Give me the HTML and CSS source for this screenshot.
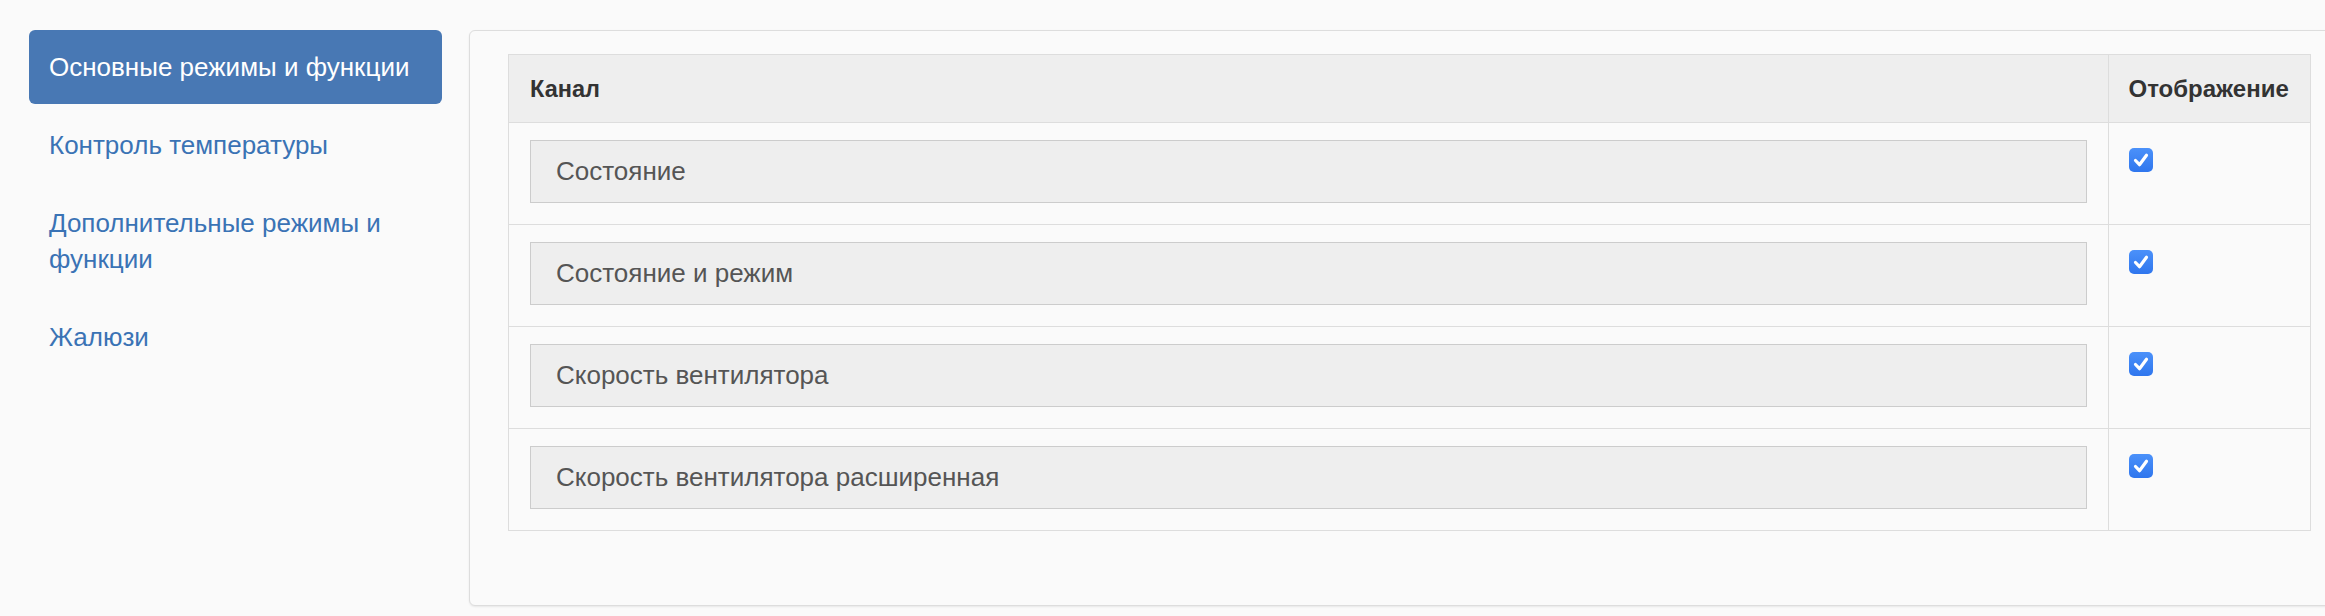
FILE: index.html
```html
<!DOCTYPE html>
<html lang="ru">
<head>
<meta charset="utf-8">
<title>Каналы</title>
<link rel="stylesheet" href="styles.css">
</head>
<body>
<div class="page">
  <ul class="nav">
    <li class="nav-item active"><a href="#">Основные режимы и функции</a></li>
    <li class="nav-item"><a href="#">Контроль температуры</a></li>
    <li class="nav-item"><a href="#">Дополнительные режимы и функции</a></li>
    <li class="nav-item"><a href="#">Жалюзи</a></li>
  </ul>
  <div class="panel">
    <table class="grid">
      <thead>
        <tr>
          <th class="col-channel">Канал</th>
          <th class="col-show">Отображение</th>
        </tr>
      </thead>
      <tbody>
        <tr>
          <td class="cell-channel"><div class="field">Состояние</div></td>
          <td class="cell-show"><span class="check"><svg viewBox="0 0 24 24" width="24" height="24"><path d="M6.5 12.5l4 4.2 7-9.4" fill="none" stroke="#fff" stroke-width="3.2" stroke-linecap="round" stroke-linejoin="round"/></svg></span></td>
        </tr>
        <tr>
          <td class="cell-channel"><div class="field">Состояние и режим</div></td>
          <td class="cell-show"><span class="check"><svg viewBox="0 0 24 24" width="24" height="24"><path d="M6.5 12.5l4 4.2 7-9.4" fill="none" stroke="#fff" stroke-width="3.2" stroke-linecap="round" stroke-linejoin="round"/></svg></span></td>
        </tr>
        <tr>
          <td class="cell-channel"><div class="field">Скорость вентилятора</div></td>
          <td class="cell-show"><span class="check"><svg viewBox="0 0 24 24" width="24" height="24"><path d="M6.5 12.5l4 4.2 7-9.4" fill="none" stroke="#fff" stroke-width="3.2" stroke-linecap="round" stroke-linejoin="round"/></svg></span></td>
        </tr>
        <tr>
          <td class="cell-channel"><div class="field">Скорость вентилятора расширенная</div></td>
          <td class="cell-show"><span class="check"><svg viewBox="0 0 24 24" width="24" height="24"><path d="M6.5 12.5l4 4.2 7-9.4" fill="none" stroke="#fff" stroke-width="3.2" stroke-linecap="round" stroke-linejoin="round"/></svg></span></td>
        </tr>
      </tbody>
    </table>
  </div>
</div>
</body>
</html>
```
FILE: styles.css
```css
html, body {
  margin: 0;
  padding: 0;
  background: #fafafa;
  overflow: hidden;
}
body {
  font-family: "Liberation Sans", Arial, Helvetica, sans-serif;
  width: 2325px;
  height: 616px;
}
.page {
  display: flex;
  align-items: flex-start;
  padding: 30px 0 0 29px;
}
.nav {
  list-style: none;
  margin: 0;
  padding: 0;
  width: 413px;
  flex: none;
  display: flex;
  flex-direction: column;
  gap: 4px;
}
.nav-item a {
  display: block;
  padding: 19px 8px 19px 20px;
  font-size: 26px;
  line-height: 36px;
  color: #3a73b5;
  text-decoration: none;
  border-radius: 6px;
}
.nav-item.active a {
  background: #4878b4;
  color: #fff;
}
.panel {
  flex: none;
  margin-left: 27px;
  width: 1881px;
  height: 576px;
  box-sizing: border-box;
  background: #fafafa;
  border: 1.5px solid #dddddd;
  border-radius: 6px;
  box-shadow: 0 1px 2px rgba(0,0,0,0.08);
  padding: 22.5px 0 0 37.5px;
}
.grid {
  border-collapse: collapse;
  width: 1803px;
  table-layout: fixed;
}
.grid th, .grid td {
  box-sizing: border-box;
  border: 1.5px solid #dddddd;
  text-align: left;
  vertical-align: top;
}
.grid th {
  background: #eeeeee;
  color: #333;
  font-weight: bold;
  font-size: 23.5px;
  line-height: 32px;
  padding: 18px 16px 17.5px 21.5px;
}
.col-show { width: 202px; }
.grid th.col-show {
  font-size: 24px;
  padding-left: 20px;
  padding-right: 0;
  white-space: nowrap;
}
.cell-channel {
  padding: 16.5px 21px 21.5px 21.5px;
}
.field {
  height: 63px;
  box-sizing: border-box;
  border: 1.5px solid #cccccc;
  background: #eeeeee;
  color: #555555;
  font-size: 26px;
  line-height: 60px;
  padding: 0 25px;
  white-space: nowrap;
}
.cell-show {
  padding: 24.5px 0 0 20px;
}
.check {
  display: block;
  width: 24px;
  height: 24px;
  border-radius: 5px;
  background: linear-gradient(#4b91fa, #2f76ee);
}
.check svg {
  display: block;
}
```
